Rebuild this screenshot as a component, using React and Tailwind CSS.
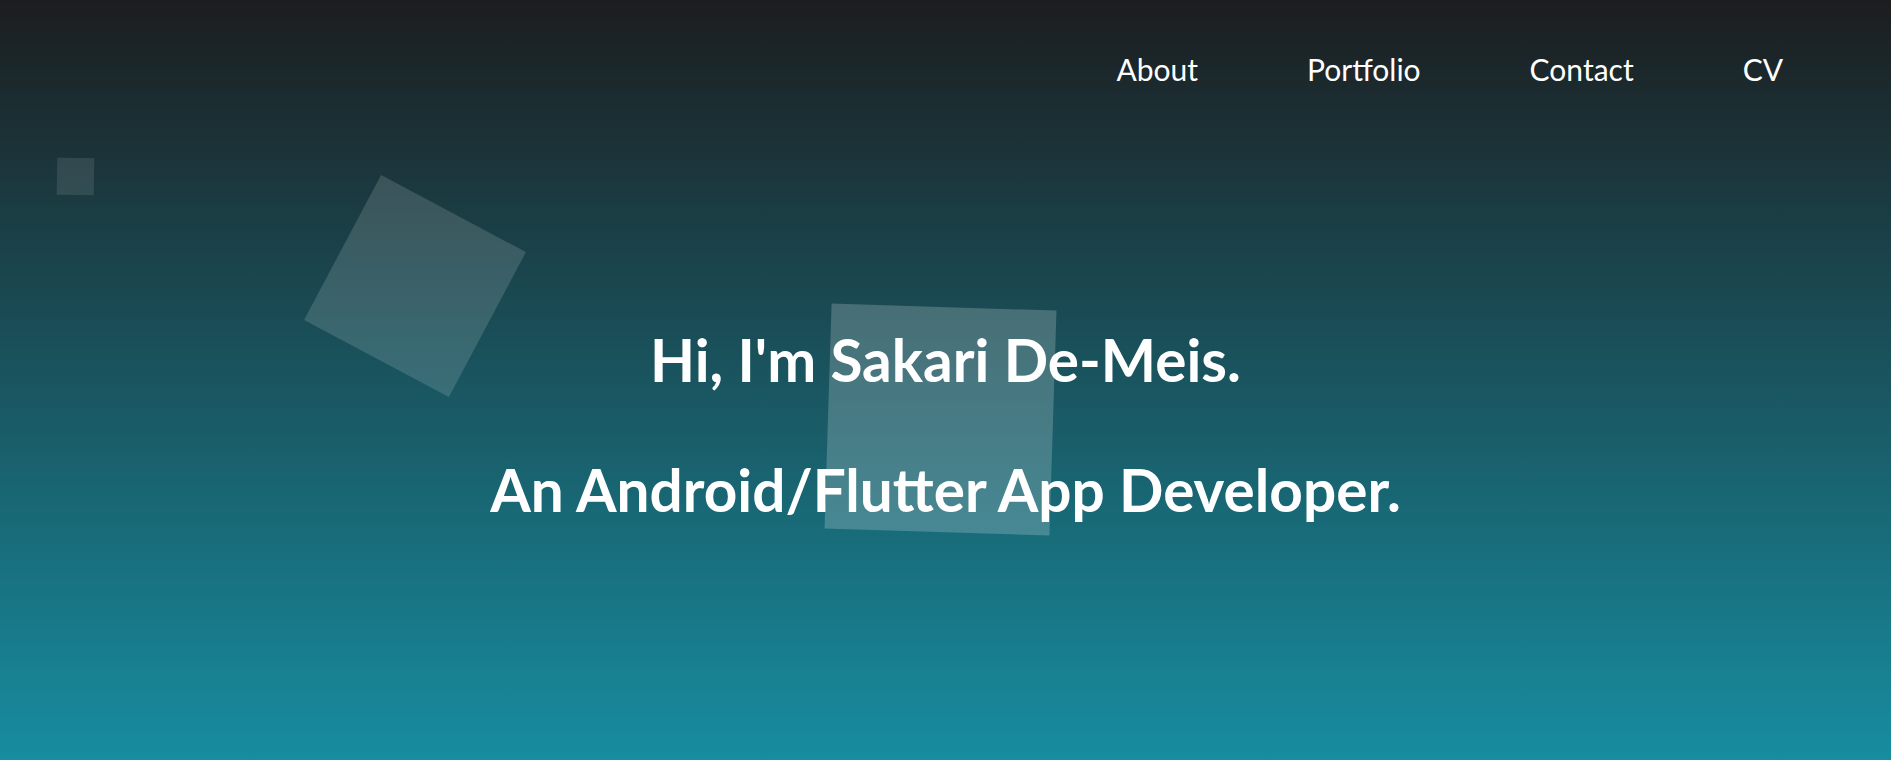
import React from "react";

const links = ["About", "Portfolio", "Contact", "CV"];

const Square = ({ className }) => <div className={"absolute " + className} />;

const App = () => {
  return (
    <div className="relative h-[760px] w-full overflow-hidden bg-linear-to-b/srgb from-[#1c1d1f] to-[#178da0] font-['Lato','Open_Sans',sans-serif] text-white">
      {/* floating squares */}
      <Square className="left-[57px] top-[158px] h-[37px] w-[37px] rotate-[1deg] bg-white/10" />
      <Square className="left-[333px] top-[204px] h-[164px] w-[164px] rotate-[28deg] bg-white/[0.14]" />
      <Square className="left-[828px] top-[307px] h-[225px] w-[225px] rotate-[1.8deg] bg-white/20" />

      <nav className="relative flex h-[138px] items-center justify-end gap-[109px] pr-[108px]">
        {links.map((link) => (
          <a key={link} href="#" className="text-[30px] leading-none">
            {link}
          </a>
        ))}
      </nav>

      <div className="relative flex flex-col items-center pt-[192px] text-center font-bold">
        <h1 className="text-[58.5px] leading-none">Hi, I'm Sakari De-Meis.</h1>
        <h2 className="mt-[71px] text-[58.5px] leading-none">An Android/Flutter App Developer.</h2>
      </div>
    </div>
  );
};

export default App;
